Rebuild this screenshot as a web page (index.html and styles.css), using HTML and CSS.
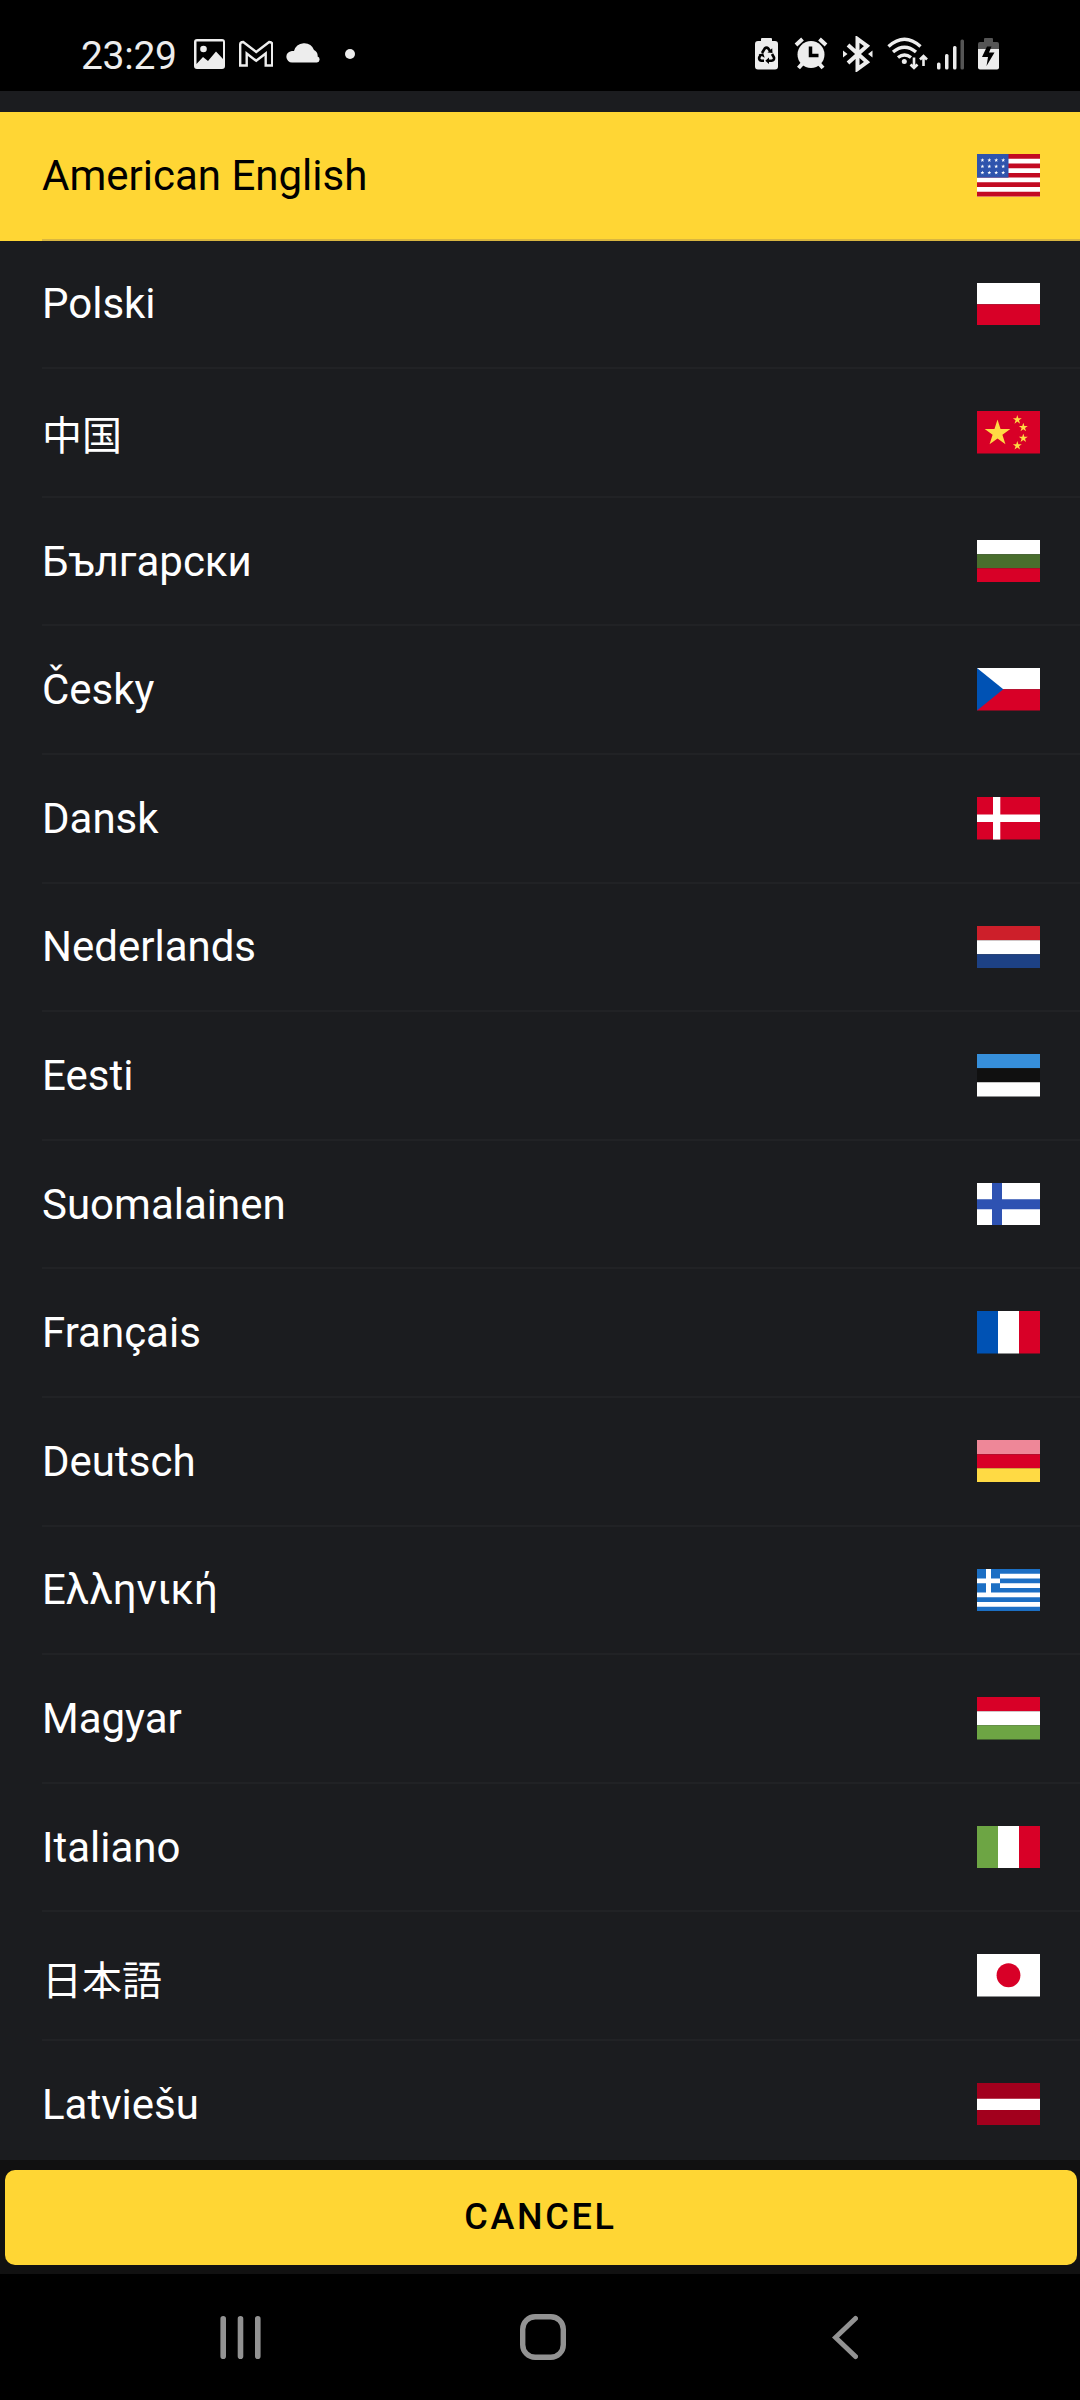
FILE: index.html
```html
<!DOCTYPE html>
<html lang="en">
<head>
<meta charset="utf-8">
<title>Language</title>
<link rel="stylesheet" href="styles.css">
</head>
<body>
<svg class="defs" width="0" height="0" aria-hidden="true">
  <symbol id="star" viewBox="-10 -10 20 20"><path d="M0-10 2.25-3.09H9.51L3.63 1.18 5.88 8.09 0 3.82-5.88 8.09-3.63 1.18-9.51-3.09H-2.25Z"/></symbol>
</svg>
<div class="screen">
  <header class="status">
    <div class="status-left">
      <span class="clock">23:29</span>
      <svg class="picture" width="31" height="36" viewBox="194 36 31 36"><path fill-rule="evenodd" d="M197 39h25q3 0 3 3v24q0 3-3 3h-25q-3 0-3-3V42q0-3 3-3ZM196.500 41.500V64l6.500-7 5 4 8-9.500 7 7.500V41.500Z"/><circle cx="203.500" cy="49" r="3.300"/></svg>
      <svg class="mail" width="34" height="36" viewBox="239 36 34 36"><path class="line" d="M240.200 44.500q0-2.500 3-2.500l13 10 13-10q3 0 3 2.500V65.500h-6.500V53.500l-9.500 7.300-9.500-7.300V65.500h-6.500Z"/></svg>
      <svg class="cloud" width="35" height="36" viewBox="286 36 35 36"><path d="M292 62.500a5.700 5.700 0 0 1-1-11.300c1-.3 2.500-.2 3-.2a10.500 10.500 0 0 1 20-1c2.500 1 4 3.500 3.600 6.400a3.200 3.200 0 0 1-.6 6.100Z"/></svg>
      <svg class="dot" width="10" height="36" viewBox="345 36 10 36"><circle cx="350" cy="54" r="5"/></svg>
    </div>
    <div class="status-right">
      <svg width="23" height="36" viewBox="755 36 23 36"><path d="M761 41v-2q0-1 1-1h9q1 0 1 1v2h3q3 0 3 3v22.500q0 3-3 3h-17q-3 0-3-3V44q0-3 3-3Z"/><g class="recycle"><path d="m762 53 2.700-4.500q1.800-1.800 3.600 0l1.700 2.500M772 54l2 3.500q.5 3-2.500 3.300H768M764 60.800h-2.500q-3-.8-2.200-3.600l1.700-2.700"/></g><path class="ink" d="m767.500 52.500 5 .5-.3-4.800ZM769 57.500v6.500l-3.700-3.200ZM758.500 54.500l4.700-1.300 1.500 4.500Z"/></svg>
      <svg class="alarm" width="34" height="36" viewBox="794 36 34 36"><path class="thick" d="m796 45 6.500-6M826 45l-6.500-6M798.500 68l4-4.500M823 68l-4-4.500"/><circle cx="811" cy="54.500" r="13.500"/><path class="hands" d="M810.500 46.500v9h8"/></svg>
      <svg class="bluetooth" width="30" height="36" viewBox="843 36 30 36"><path class="thick" d="m848 45 19 17-9.500 7V39l9.500 7-19 17"/><path d="m843 50.500 4.500 3.500-4.500 3.500ZM872.500 50.500 868 54l4.500 3.500Z"/></svg>
      <svg class="wifi" width="41" height="36" viewBox="887 36 41 36"><path class="arc" d="M888.500 46.500q16-14.500 32 0M893 52q11.500-9.500 23 0M898 57.500q6.500-5 13 0"/><circle cx="904.300" cy="61.500" r="2.500"/><path class="arrow" d="M914 57.500v10M910.500 64.500l3.500 3.500 3.500-3.500M923.500 66V56.500M920 59.500l3.500-3.500 3.500 3.500"/></svg>
      <svg class="signal" width="27" height="36" viewBox="937 36 27 36"><rect x="937" y="62.500" width="3.500" height="7" rx="1.500"/><rect x="945" y="54" width="3.500" height="15.500" rx="1.500"/><rect x="953" y="46" width="3.500" height="23.500" rx="1.500"/><rect class="faint" x="960.500" y="39.500" width="3.500" height="30" rx="1.500"/></svg>
      <svg class="charge" width="21" height="36" viewBox="978 36 21 36"><path class="faint" d="M984 42v-3q0-1 1-1h7q1 0 1 1v3h4q2 0 2 2v5h-21v-5q0-2 2-2Z"/><path d="M978 49h21v18.500q0 2-2 2h-17q-2 0-2-2Z"/><path class="ink" d="m987 46.500 4.500 0-2.500 6h5.500l-8 13.500 1.500-9h-6Z"/></svg>
    </div>
  </header>

  <main class="list">
    <div class="row selected"><span>American English</span>
      <svg class="flag" viewBox="0 0 63 42" preserveAspectRatio="none"><path fill="#fff" d="M0 0h63v42H0z"/><path fill="#c20a22" d="M0 0h63v4.670H0zM0 9.330h63v4.670H0zM0 18.670h63v4.670H0zM0 28h63v4.670H0zM0 37.330h63V42H0z"/><path fill="#2f54ad" d="M0 0h31.500v23.330H0z"/><g fill="#fff"><use href="#star" x="3.300" y="4" width="4.200" height="4.200"/><use href="#star" x="10.200" y="4" width="4.200" height="4.200"/><use href="#star" x="17.100" y="4" width="4.200" height="4.200"/><use href="#star" x="24.100" y="4" width="4.200" height="4.200"/><use href="#star" x="3.300" y="10.200" width="4.200" height="4.200"/><use href="#star" x="10.200" y="10.200" width="4.200" height="4.200"/><use href="#star" x="17.100" y="10.200" width="4.200" height="4.200"/><use href="#star" x="24.100" y="10.200" width="4.200" height="4.200"/><use href="#star" x="3.300" y="16.400" width="4.200" height="4.200"/><use href="#star" x="10.200" y="16.400" width="4.200" height="4.200"/><use href="#star" x="17.100" y="16.400" width="4.200" height="4.200"/><use href="#star" x="24.100" y="16.400" width="4.200" height="4.200"/></g></svg></div>
    <div class="row"><span>Polski</span>
      <svg class="flag" viewBox="0 0 63 42" preserveAspectRatio="none"><path fill="#fff" d="M0 0h63v21H0z"/><path fill="#d80027" d="M0 21h63v21H0z"/></svg></div>
    <div class="row"><span class="cjk" lang="zh">中国</span>
      <svg class="flag" viewBox="0 0 63 42" preserveAspectRatio="none"><path fill="#d80027" d="M0 0h63v42H0z"/><g fill="#ffda44"><use href="#star" x="7" y="8.500" width="27" height="27"/><use href="#star" x="35.600" y="4" width="9.400" height="9.400"/><use href="#star" x="41.600" y="11.600" width="9.400" height="9.400"/><use href="#star" x="41.600" y="22.200" width="9.400" height="9.400"/><use href="#star" x="35.600" y="29.600" width="9.400" height="9.400"/></g></svg></div>
    <div class="row"><span lang="bg">Български</span>
      <svg class="flag" viewBox="0 0 63 42" preserveAspectRatio="none"><path fill="#fff" d="M0 0h63v14H0z"/><path fill="#496e2d" d="M0 14h63v14H0z"/><path fill="#d80027" d="M0 28h63v14H0z"/></svg></div>
    <div class="row"><span>Česky</span>
      <svg class="flag" viewBox="0 0 63 42" preserveAspectRatio="none"><path fill="#fff" d="M0 0h63v21H0z"/><path fill="#d80027" d="M0 21h63v21H0z"/><path fill="#0052b4" d="m0 0 26.300 21L0 42z"/></svg></div>
    <div class="row"><span>Dansk</span>
      <svg class="flag" viewBox="0 0 63 42" preserveAspectRatio="none"><path fill="#d80027" d="M0 0h63v42H0z"/><path fill="#fff" d="M16 0h7.300v42H16zM0 17.200h63v7.400H0z"/></svg></div>
    <div class="row"><span>Nederlands</span>
      <svg class="flag" viewBox="0 0 63 42" preserveAspectRatio="none"><path fill="#cd1f2a" d="M0 0h63v14H0z"/><path fill="#fff" d="M0 14h63v14H0z"/><path fill="#1d4185" d="M0 28h63v14H0z"/></svg></div>
    <div class="row"><span>Eesti</span>
      <svg class="flag" viewBox="0 0 63 42" preserveAspectRatio="none"><path fill="#368fdb" d="M0 0h63v14H0z"/><path fill="#101010" d="M0 14h63v14H0z"/><path fill="#fff" d="M0 28h63v14H0z"/></svg></div>
    <div class="row"><span>Suomalainen</span>
      <svg class="flag" viewBox="0 0 63 42" preserveAspectRatio="none"><path fill="#fff" d="M0 0h63v42H0z"/><path fill="#2e52b2" d="M15 0h10v42H15zM0 16h63v10H0z"/></svg></div>
    <div class="row"><span>Français</span>
      <svg class="flag" viewBox="0 0 63 42" preserveAspectRatio="none"><path fill="#0052b4" d="M0 0h21v42H0z"/><path fill="#fff" d="M21 0h21v42H21z"/><path fill="#d80027" d="M42 0h21v42H42z"/></svg></div>
    <div class="row"><span>Deutsch</span>
      <svg class="flag" viewBox="0 0 63 42" preserveAspectRatio="none"><path fill="#ee8798" d="M0 0h63v14H0z"/><path fill="#d80027" d="M0 14h63v14H0z"/><path fill="#ffda44" d="M0 28h63v14H0z"/></svg></div>
    <div class="row"><span lang="el">Ελληνική</span>
      <svg class="flag" viewBox="0 0 63 42" preserveAspectRatio="none"><path fill="#1c6fc4" d="M0 0h63v42H0z"/><path fill="#fff" d="M23 4.670h40v4.660H23zM23 14h40v4.670H23zM0 23.330h63V28H0zM0 32.670h63v4.660H0zM9 0h5v23.330H9zM0 9.330h23V14H0z"/></svg></div>
    <div class="row"><span>Magyar</span>
      <svg class="flag" viewBox="0 0 63 42" preserveAspectRatio="none"><path fill="#d80027" d="M0 0h63v14H0z"/><path fill="#fff" d="M0 14h63v14H0z"/><path fill="#6da544" d="M0 28h63v14H0z"/></svg></div>
    <div class="row"><span>Italiano</span>
      <svg class="flag" viewBox="0 0 63 42" preserveAspectRatio="none"><path fill="#6da544" d="M0 0h21v42H0z"/><path fill="#fff" d="M21 0h21v42H21z"/><path fill="#d80027" d="M42 0h21v42H42z"/></svg></div>
    <div class="row"><span class="cjk" lang="ja">日本語</span>
      <svg class="flag" viewBox="0 0 63 42" preserveAspectRatio="none"><path fill="#fff" d="M0 0h63v42H0z"/><circle fill="#d80027" cx="31.500" cy="21" r="11.900"/></svg></div>
    <div class="row"><span>Latviešu</span>
      <svg class="flag" viewBox="0 0 63 42" preserveAspectRatio="none"><path fill="#a2001d" d="M0 0h63v42H0z"/><path fill="#fff" d="M0 15.600h63v11H0z"/></svg></div>
  </main>

  <div class="actions"><button class="cancel" type="button">CANCEL</button></div>

  <nav class="navbar">
    <svg class="recents" width="42" height="48" viewBox="220 2313 42 48"><path d="M223.200 2318.800v37.400M240.500 2318.800v37.400M257.800 2318.800v37.400"/></svg>
    <svg class="home" width="46" height="48" viewBox="520 2313 46 48"><rect x="522.700" y="2316.700" width="40.600" height="40.600" rx="12.500"/></svg>
    <svg class="back" width="26" height="48" viewBox="832 2313 26 48"><path d="m855.500 2318.500-20 19 20 19"/></svg>
  </nav>
</div>
</body>
</html>
```
FILE: styles.css
```css
body {
  margin: 0;
  background: #000;
  font-family: Roboto, "Noto Sans CJK SC", sans-serif;
}

svg {
  display: block;
  flex: none;
}

.defs {
  position: absolute;
}

.screen {
  display: flex;
  flex-direction: column;
  width: 1080px;
  height: 2400px;
  overflow: hidden;
}

/* Status bar */
.status {
  display: flex;
  justify-content: space-between;
  flex: none;
  box-sizing: border-box;
  height: 91px;
  padding: 36px 81px 0 81px;
  fill: #ededed;
}

.status-left,
.status-right {
  display: flex;
  height: 36px;
}

.clock {
  width: 113px;
  font-size: 39px;
  line-height: 40px;
  letter-spacing: -0.3px;
  color: #ededed;
}

.mail { margin-left: 14px; }
.cloud { margin-left: 13px; }
.dot { margin-left: 24px; }
.alarm { margin-left: 16px; }
.bluetooth { margin-left: 15px; }
.wifi { margin-left: 14px; }
.signal { margin-left: 9px; }
.charge { margin-left: 14px; }

.ink { fill: #000; }
.faint { fill: #555; }

.line,
.recycle,
.thick,
.hands,
.arc,
.arrow {
  fill: none;
  stroke: #ededed;
}

.line { stroke-width: 2.4; }
.recycle { stroke: #000; stroke-width: 2.6; }
.thick { stroke-width: 4; }
.hands { stroke: #000; stroke-width: 3.5; }
.arc { stroke-width: 3.4; }
.arrow { stroke-width: 2.6; }

/* Language list */
.list {
  flex: none;
  box-sizing: border-box;
  height: 2069px;
  padding-top: 21px;
  overflow: hidden;
  background: #1b1c1f;
}

.row {
  display: flex;
  align-items: center;
  justify-content: space-between;
  box-sizing: border-box;
  height: 128.6px;
  padding: 0 40px 2px 42px;
  font-size: 42px;
  line-height: 50px;
  color: #fff;
  background: linear-gradient(#212225, #212225) 42px 100% / 100% 2px no-repeat;
}

.row span {
  padding-top: 1.2px;
}

.selected {
  color: #000;
  background: linear-gradient(#d9b640, #d9b640) 42px 100% / 100% 2px no-repeat #ffd634;
}

.row .cjk {
  padding-top: 10px;
  font-size: 40px;
}

.row .cjk:lang(ja) {
  padding-top: 5px;
  font-family: "Noto Sans CJK JP", sans-serif;
}

.flag {
  width: 63px;
  height: 42.5px;
}

/* Bottom action */
.actions {
  display: flex;
  flex: none;
  box-sizing: border-box;
  height: 114px;
  padding: 10px 3px 9px 5px;
  background: #111;
}

.cancel {
  flex: 1;
  border: 0;
  border-radius: 10px;
  padding: 0 1px 1px 0;
  background: #ffd634;
  color: #000;
  font: 500 36px/42px Roboto, sans-serif;
  letter-spacing: 2.7px;
}

/* System navigation */
.navbar {
  display: flex;
  height: 48px;
  padding: 39px 0 0 220px;
  fill: none;
  stroke: #929292;
}

.recents {
  stroke-width: 5.6;
  stroke-linecap: round;
}

.home {
  margin-left: 258px;
  stroke-width: 5.4;
}

.back {
  margin-left: 266px;
  stroke-width: 5;
  stroke-linecap: round;
}
```
